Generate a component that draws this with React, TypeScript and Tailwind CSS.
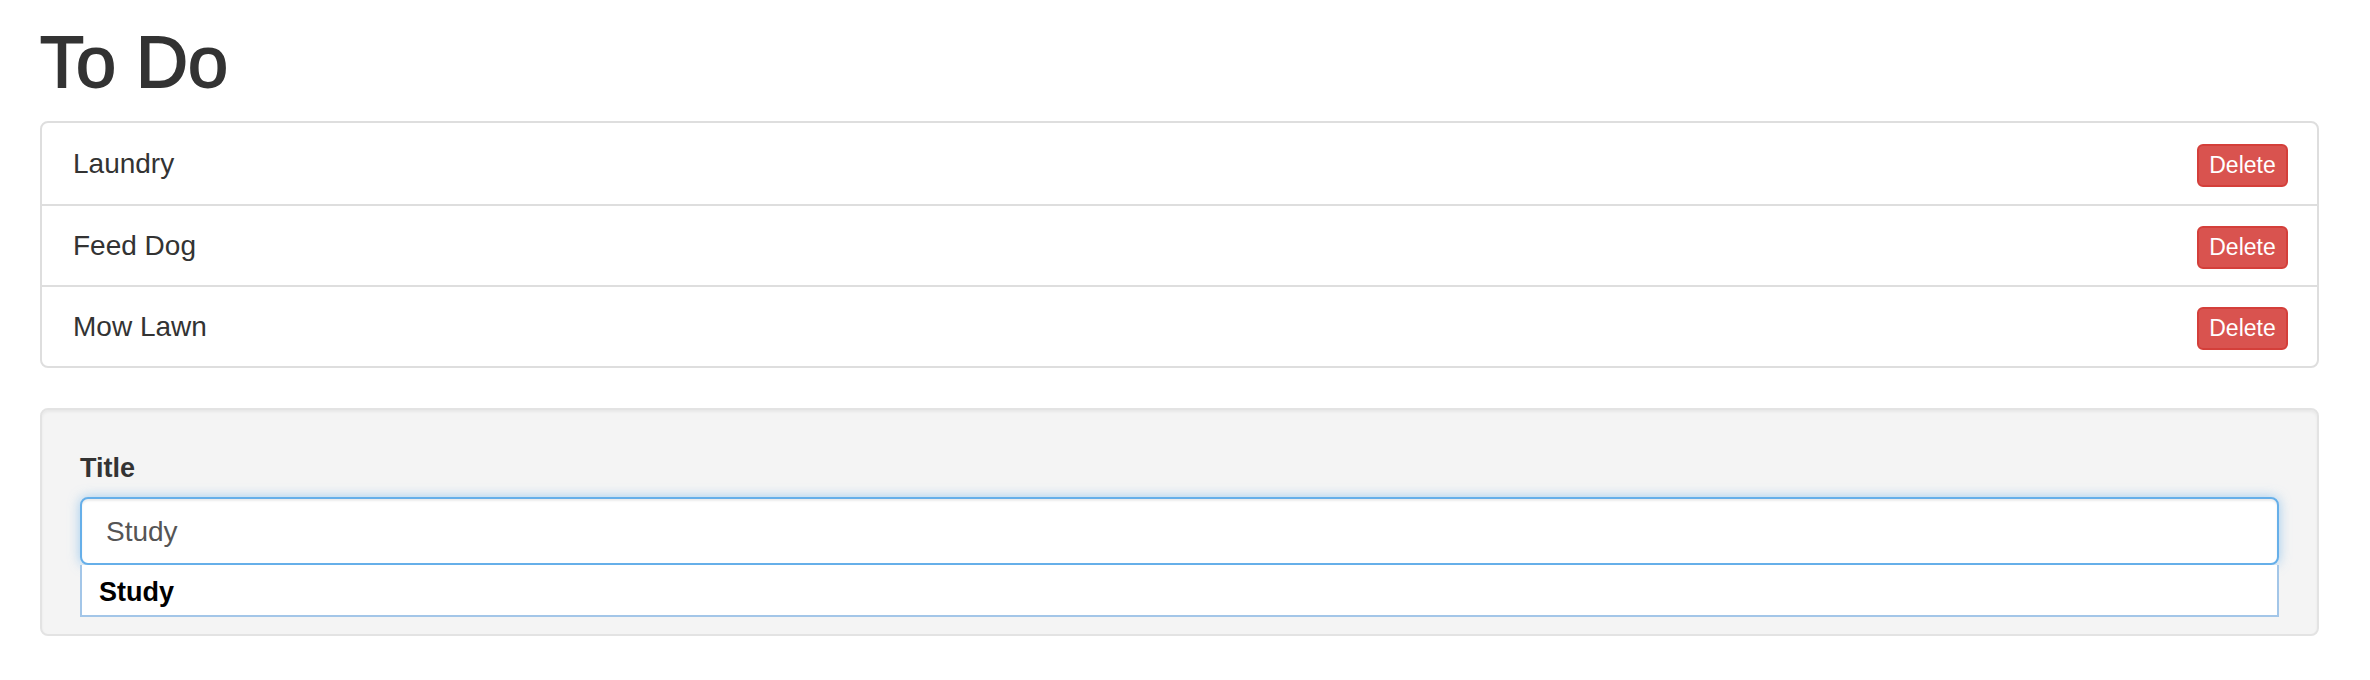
import React from "react";

const items = ["Laundry", "Feed Dog", "Mow Lawn"];

export default function App() {
  return (
    <div
      className="bg-white min-h-[680px] pl-[40px] pr-[51px] text-[#333]"
      style={{ fontFamily: '"Liberation Sans", Arial, sans-serif' }}
    >
      <h1 className="text-[72px] leading-[1.1] font-medium pt-[23px] mb-[19px] text-[#333] [-webkit-text-stroke:1.8px_#333]">
        To Do
      </h1>
      <div className="border-2 border-[#dedede] rounded-[8px] bg-white">
        {items.map((t, i) => (
          <div
            key={t}
            className={
              "flex items-center justify-between h-[81px] pl-[31px] pr-[29px] " +
              (i > 0 ? "border-t-2 border-[#dedede]" : "")
            }
          >
            <span className="text-[28px] text-[#333]">{t}</span>
            <button className="h-[43px] w-[91px] mt-[3px] rounded-[6px] bg-[#d9534f] border-2 border-[#d43f3a] text-white text-[23px] leading-none flex items-center justify-center">
              Delete
            </button>
          </div>
        ))}
      </div>
      <div className="mt-[40px] bg-[#f4f4f4] border-2 border-[#e3e3e3] rounded-[8px] shadow-[inset_0_2px_3px_rgba(0,0,0,0.05)] px-[38px] pt-[40px] pb-[17px]">
        <label className="block text-[27px] font-bold leading-[37px] text-[#333] mb-[10px]">
          Title
        </label>
        <div className="h-[68px] bg-white border-2 border-[#66afe9] rounded-[8px] shadow-[inset_0_2px_2px_rgba(0,0,0,0.075),0_0_12px_rgba(102,175,233,0.6)] flex items-center pl-[24px] pt-[2px]">
          <span className="text-[28px] text-[#555]">Study</span>
        </div>
        <div className="h-[52px] bg-white border-2 border-t-0 border-[#a3c6e8] flex items-center pl-[17px] pt-[4px]">
          <span className="text-[27px] font-bold text-black">Study</span>
        </div>
      </div>
    </div>
  );
}
